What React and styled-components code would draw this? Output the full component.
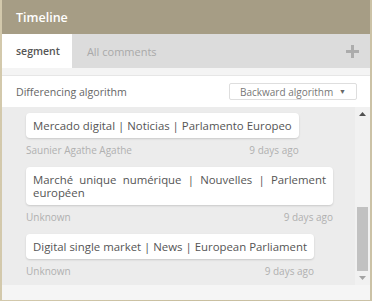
import React from 'react';
import styled, { createGlobalStyle } from 'styled-components';

const items = [
  { text: 'Mercado digital | Noticias | Parlamento Europeo', author: 'Saunier Agathe Agathe', when: '9 days ago' },
  { text: 'Marché unique numérique | Nouvelles | Parlement européen', author: 'Unknown', when: '9 days ago' },
  { text: 'Digital single market | News | European Parliament', author: 'Unknown', when: '9 days ago' },
];

const Timeline = () => (
  <Panel>
    <Header>Timeline</Header>
    <Tabs>
      <Tab active>segment</Tab>
      <Tab>All comments</Tab>
      <AddButton aria-label="add">
        <svg width="13" height="13" viewBox="0 0 13 13">
          <rect x="5" y="0" width="3" height="13" fill="#acacac" />
          <rect x="0" y="5" width="13" height="3" fill="#acacac" />
        </svg>
      </AddButton>
    </Tabs>
    <Controls>
      <Label>Differencing algorithm</Label>
      <Select>
        Backward algorithm
        <Caret>▼</Caret>
      </Select>
    </Controls>
    <Body>
      <List>
        {items.map((item, i) => (
          <Item key={i}>
            <Card>{item.text}</Card>
            <Meta>
              <span>{item.author}</span>
              <span>{item.when}</span>
            </Meta>
          </Item>
        ))}
      </List>
      <Scrollbar>
        <Arrow>
          <svg width="7" height="4" viewBox="0 0 7 4">
            <path d="M0 4 L3.5 0 L7 4 Z" fill="#505050" />
          </svg>
        </Arrow>
        <Thumb />
        <Arrow>
          <svg width="7" height="4" viewBox="0 0 7 4">
            <path d="M0 0 L7 0 L3.5 4 Z" fill="#a3a3a3" />
          </svg>
        </Arrow>
      </Scrollbar>
    </Body>
    <Footer />
  </Panel>
);

const GlobalStyle = createGlobalStyle`
  html, body {
    margin: 0;
    height: 100%;
    background: linear-gradient(90deg, #d3c9ac 0%, #c9bf9f 50%, #cbc2a6 100%);
    font-family: "Open Sans", "Noto Sans", sans-serif;
  }
`;

const Panel = styled.div`
  margin: 0 2px;
  height: 300px;
  display: flex;
  flex-direction: column;
  background: #f4f4f4;
`;

const Header = styled.div`
  height: 34px;
  flex-shrink: 0;
  display: flex;
  align-items: center;
  padding: 0 14px;
  background: #a69d85;
  color: #fff;
  font-size: 12.5px;
  font-weight: 600;
`;

const Tabs = styled.div`
  height: 34px;
  flex-shrink: 0;
  display: flex;
  align-items: stretch;
  background: #dcdcdc;
`;

const Tab = styled.div`
  display: flex;
  align-items: center;
  padding: ${p => (p.active ? '0 12px 0 14px' : '0 14px 0 15px')};
  font-size: ${p => (p.active ? '10.5px' : '11px')};
  font-weight: ${p => (p.active ? 600 : 400)};
  color: ${p => (p.active ? '#555' : '#a9a9a9')};
  background: ${p => (p.active ? '#fff' : 'transparent')};
`;

const AddButton = styled.div`
  margin-left: auto;
  width: 36px;
  display: flex;
  align-items: center;
  justify-content: center;
`;

const Controls = styled.div`
  margin-top: 7px;
  height: 31px;
  flex-shrink: 0;
  display: flex;
  align-items: center;
  justify-content: space-between;
  padding: 0 13px 0 14px;
  background: #fff;
  border-top: 1px solid #e6e6e6;
`;

const Label = styled.span`
  font-size: 10.6px;
  color: #666;
`;

const Select = styled.div`
  width: 128px;
  height: 17px;
  box-sizing: border-box;
  display: flex;
  align-items: center;
  justify-content: space-between;
  padding: 0 10px;
  border: 1px solid #dedede;
  border-radius: 2px;
  font-size: 10px;
  color: #777;
`;

const Caret = styled.span`
  font-size: 7px;
  color: #666;
`;

const Body = styled.div`
  height: 178px;
  flex-shrink: 0;
  display: flex;
  background: #ececec;
`;

const List = styled.div`
  flex: 1;
  padding: 6px 0 0 24px;
`;

const Item = styled.div`
  display: table;
  max-width: 307px;
  margin-bottom: 11px;
`;

const Card = styled.div`
  background: #fff;
  border-radius: 4px;
  box-shadow: 0 1px 2px rgba(0, 0, 0, 0.15);
  padding: 6px 7px;
  font-size: 11.4px;
  line-height: 13px;
  color: #555;
  text-align: justify;
`;

const Meta = styled.div`
  margin-top: 6px;
  display: flex;
  justify-content: space-between;
  font-size: 10px;
  line-height: 12px;
  color: #b0b0b0;
`;

const Scrollbar = styled.div`
  width: 15px;
  display: flex;
  flex-direction: column;
  background: #f1f1f1;
`;

const Arrow = styled.div`
  height: 14px;
  display: flex;
  align-items: center;
  justify-content: center;
`;

const Thumb = styled.div`
  margin: auto 2px 0;
  height: 64px;
  background: #c1c1c1;
`;

const Footer = styled.div`
  flex: 1;
  background: #f5f5f5;
`;

const App = () => (
  <>
    <GlobalStyle />
    <Timeline />
  </>
);

export default App;
